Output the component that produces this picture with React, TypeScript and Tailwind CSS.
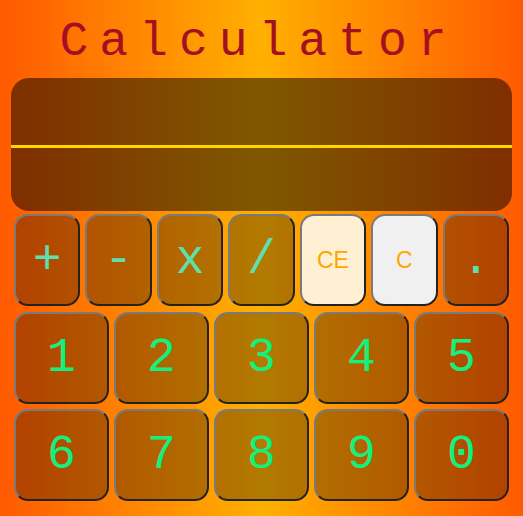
import React from "react";

const mono = { fontFamily: '"Liberation Mono", "DejaVu Sans Mono", monospace' };

function Btn({ label, kind }: { label: string; kind: "op" | "num" | "ce" | "c" }) {
  let cls =
    "flex items-center justify-center rounded-[14px] border-2 border-t-[#7a7a7a] border-l-[#7a7a7a] border-r-[#222] border-b-[#222] ";
  if (kind === "ce") cls += "bg-[#fff0d4] text-[#ffa500] text-[23px]";
  else if (kind === "c") cls += "bg-[#f0f0f0] text-[#ffa500] text-[23px]";
  else if (kind === "op") cls += "bg-[rgba(0,0,0,0.3)] text-[#5edfb0] text-[48px]";
  else cls += "bg-[rgba(0,0,0,0.3)] text-[#14f07c] text-[48px]";
  const style =
    kind === "ce" || kind === "c"
      ? { fontFamily: '"Liberation Sans", Arial, sans-serif' }
      : mono;
  return (
    <div className={cls} style={style}>
      <span className="leading-none">{label}</span>
    </div>
  );
}

export default function App() {
  return (
    <div className="min-h-screen w-full bg-[linear-gradient(to_right,#ff5a00,#ffb000,#ff5a00)] flex flex-col">
      <div className="h-[78px] pt-[5px] flex items-center justify-center">
        <h1
          className="text-[48px] leading-none tracking-[11px] text-[#a50f24] pr-[6px]"
          style={mono}
        >
          Calculator
        </h1>
      </div>
      <div className="mx-[11px] h-[133px] rounded-[18px] bg-[rgba(0,0,0,0.5)] flex flex-col overflow-hidden">
        <div className="h-[70px] border-b-[3px] border-[#ffd700]"></div>
        <div className="flex-1"></div>
      </div>
      <div className="px-[14px] mt-[3px] flex flex-col gap-[5.5px]">
        <div className="grid grid-cols-7 gap-[5px] h-[92px]">
          <Btn label="+" kind="op" />
          <Btn label="-" kind="op" />
          <Btn label="x" kind="op" />
          <Btn label="/" kind="op" />
          <Btn label="CE" kind="ce" />
          <Btn label="C" kind="c" />
          <Btn label="." kind="op" />
        </div>
        <div className="grid grid-cols-5 gap-[5px] h-[92px]">
          {["1", "2", "3", "4", "5"].map((d) => (
            <Btn key={d} label={d} kind="num" />
          ))}
        </div>
        <div className="grid grid-cols-5 gap-[5px] h-[92px]">
          {["6", "7", "8", "9", "0"].map((d) => (
            <Btn key={d} label={d} kind="num" />
          ))}
        </div>
      </div>
    </div>
  );
}
